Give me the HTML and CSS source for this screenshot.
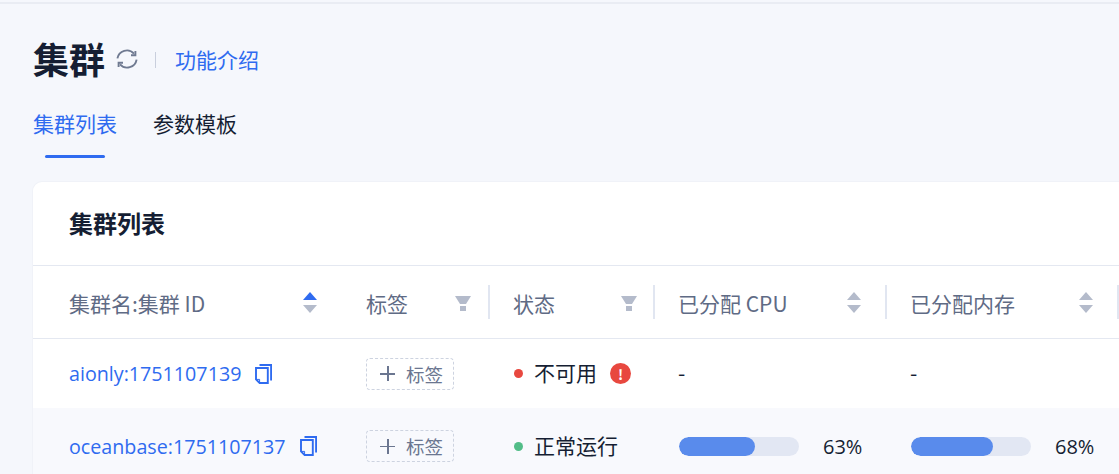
FILE: index.html
```html
<!DOCTYPE html>
<html lang="zh">
<head>
<meta charset="utf-8">
<title>集群</title>
<link rel="stylesheet" href="styles.css">
</head>
<body>
<div class="topline"></div>
<main class="page">
  <header class="title-row">
    <h1 class="title">集群</h1>
    <svg class="refresh" viewBox="0 0 22 22" width="22" height="22" fill="none" stroke="#6f7a91" stroke-width="1.9"><path d="M1.4 10.4A9.6 9.6 0 0 1 18 5.6"/><path d="M20.6 11.6A9.6 9.6 0 0 1 4 16.4"/><path d="M19.4 3v4.2h-4.4" stroke-width="1.9"/><path d="M2.6 19v-4.2h4.4" stroke-width="1.9"/></svg>
    <span class="vline"></span>
    <a class="intro">功能介绍</a>
  </header>
  <nav class="tabs">
    <span class="tab tab-active">集群列表</span>
    <span class="tab">参数模板</span>
  </nav>
  <section class="card">
    <h2 class="card-title">集群列表</h2>
    <div class="table">
      <div class="row head">
        <div class="cell first">集群名:集群 ID
          <svg class="sort" viewBox="0 0 14 21" width="14" height="21"><path d="M7 0l7 8H0z" fill="#2f6bf0"/><path d="M7 21l7-8H0z" fill="#b4bbcb"/></svg>
        </div>
        <div class="cell">标签
          <svg class="funnel" viewBox="0 0 16 15" width="16" height="15"><path d="M0 0h16l-5 8H5z M5 10h6v5H5z" fill="#b4bbcb"/></svg>
        </div>
        <div class="cell sep">状态
          <svg class="funnel status-funnel" viewBox="0 0 16 15" width="16" height="15"><path d="M0 0h16l-5 8H5z M5 10h6v5H5z" fill="#b4bbcb"/></svg>
        </div>
        <div class="cell sep">已分配 CPU
          <svg class="sort" viewBox="0 0 14 21" width="14" height="21"><path d="M7 0l7 8H0z" fill="#b4bbcb"/><path d="M7 21l7-8H0z" fill="#b4bbcb"/></svg>
        </div>
        <div class="cell sep">已分配内存
          <svg class="sort" viewBox="0 0 14 21" width="14" height="21"><path d="M7 0l7 8H0z" fill="#b4bbcb"/><path d="M7 21l7-8H0z" fill="#b4bbcb"/></svg>
        </div>
        <div class="cell sep"></div>
      </div>
      <div class="row body">
        <div class="cell first"><a class="link">aionly:1751107139</a>
          <svg class="copy" viewBox="0 0 17 20" width="17" height="20" fill="none" stroke="#2f6bf0" stroke-width="1.9"><path d="M4.5 1h11.6v15.5"/><path d="M1 4h11.8v15H4.6L1 15.4z"/><path d="M1 15.4h3.6V19" stroke-width="1"/></svg>
        </div>
        <div class="cell"><span class="tag"><i class="plus"></i>标签</span></div>
        <div class="cell"><i class="dot red"></i><span class="status">不可用</span><span class="alert">!</span></div>
        <div class="cell nil">-</div>
        <div class="cell nil">-</div>
        <div class="cell"></div>
      </div>
      <div class="row body alt">
        <div class="cell first"><a class="link">oceanbase:1751107137</a>
          <svg class="copy" viewBox="0 0 17 20" width="17" height="20" fill="none" stroke="#2f6bf0" stroke-width="1.9"><path d="M4.5 1h11.6v15.5"/><path d="M1 4h11.8v15H4.6L1 15.4z"/><path d="M1 15.4h3.6V19" stroke-width="1"/></svg>
        </div>
        <div class="cell"><span class="tag"><i class="plus"></i>标签</span></div>
        <div class="cell"><i class="dot green"></i><span class="status">正常运行</span></div>
        <div class="cell"><span class="bar"><span class="fill" style="width:63%"></span></span><span class="pct">63%</span></div>
        <div class="cell"><span class="bar"><span class="fill" style="width:68%"></span></span><span class="pct">68%</span></div>
        <div class="cell"></div>
      </div>
    </div>
  </section>
</main>
</body>
</html>
```
FILE: styles.css
```css
* { box-sizing: border-box; }
html, body { height: 100%; }
body {
  margin: 0;
  height: 474px;
  overflow: hidden;
  background: #f5f7fc;
  color: #151e33;
  font-family: "Noto Sans CJK SC", "Noto Sans", sans-serif;
  font-size: 21px;
}
.topline { height: 4px; background: #f5f7fc; border-bottom: 2px solid #e9ecf3; }
.page { padding: 0 0 0 33px; }
.title-row { display: flex; align-items: center; height: 54px; margin-top: 29px; }
.title { margin: 0 0 4px; font-size: 36px; font-weight: 700; line-height: 54px; color: #151e33; }
.refresh { margin-left: 11px; margin-top: -2px; }
.vline { width: 1px; height: 16px; background: #c9cfdd; margin: 0 19px 0 17px; }
.intro { color: #2f6bf0; font-size: 21px; line-height: 54px; margin-top: -2px; }
.tabs { display: flex; gap: 36px; margin-top: 12px; height: 59px; }
.tab { position: relative; font-size: 21px; line-height: 48px; color: #151e33; }
.tab-active { color: #2f6bf0; }
.tab-active::after {
  content: "";
  position: absolute;
  left: 12px;
  right: 12px;
  bottom: 0;
  height: 3px;
  border-radius: 2px;
  background: #2f6bf0;
}
.card {
  margin-top: 24px;
  background: #fff;
  border-radius: 9px 0 0 0;
  box-shadow: 0 0 0 1px #f0f2f8;
  width: 1090px;
}
.card-title {
  margin: 0;
  height: 83px;
  padding-left: 36px;
  font-size: 24px;
  font-weight: 700;
  line-height: 82px;
  color: #151e33;
}
.row {
  display: grid;
  grid-template-columns: 308px 147px 165px 232px 232px 1fr;
  align-items: center;
}
.head { height: 74px; border-top: 1px solid #e4e8f1; border-bottom: 1px solid #e4e8f1; color: #5f6b85; }
.head .cell { padding-top: 2px; }
.body { height: 69px; }
.alt { height: 76px; background: #f8f9fd; }
.cell { position: relative; display: flex; align-items: center; padding-left: 25px; height: 34px; white-space: nowrap; }
.first { padding-left: 36px; }
.nil { padding-bottom: 3px; }
.sep::before {
  content: "";
  position: absolute;
  left: 0;
  top: 0;
  width: 2px;
  height: 34px;
  background: #e1e6f1;
}
.sort { position: absolute; right: 24px; top: 7px; }
.funnel { position: absolute; right: 17px; top: 11px; }
.status-funnel { right: 16px; }
.link { font-family: "Open Sans", sans-serif; color: #2f6bf0; font-size: 19.7px; }
.copy { margin-left: 14px; }
.tag {
  display: inline-flex;
  align-items: center;
  width: 88px;
  height: 32px;
  border: 1px dashed #cdd3e0;
  border-radius: 4px;
  padding-left: 13px;
  color: #6b7690;
  font-size: 18.5px;
}
.plus { position: relative; width: 15px; height: 15px; margin-right: 11px; }
.plus::before, .plus::after { content: ""; position: absolute; background: #6b7690; }
.plus::before { left: 0; right: 0; top: 7px; height: 1.5px; }
.plus::after { top: 0; bottom: 0; left: 7px; width: 1.5px; }
.dot { width: 9px; height: 9px; border-radius: 50%; margin: 0 11px 0 1px; }
.red { background: #e8483f; }
.green { background: #52bd88; }
.status { margin-top: -3px; }
.alert {
  display: inline-flex;
  align-items: center;
  justify-content: center;
  width: 21px;
  height: 21px;
  margin-left: 13px;
  border-radius: 50%;
  background: #e8483f;
  color: #fff;
  font-size: 14px;
  font-weight: 700;
}
.bar { width: 120px; height: 19px; margin-left: 1px; border-radius: 10px; background: #e2e7f3; overflow: hidden; }
.fill { display: block; height: 100%; border-radius: 10px; background: #598bec; }
.pct { margin-left: 24px; font-family: "Open Sans", sans-serif; font-size: 20px; }
```
